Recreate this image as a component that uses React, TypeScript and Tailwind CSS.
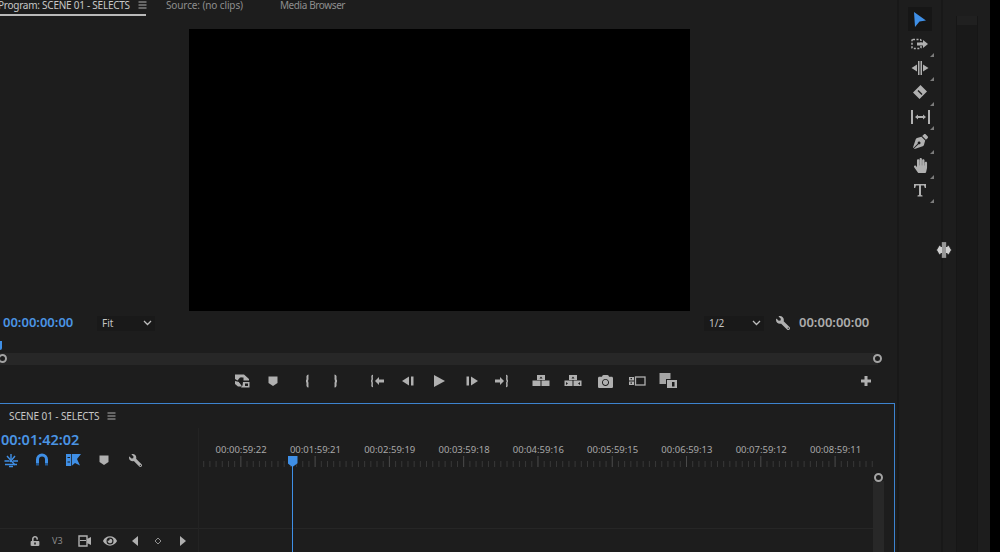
import React from "react";
import { FaWrench, FaHandPaper, FaCamera, FaPenNib, FaEye, FaUnlockAlt } from "react-icons/fa";

const G = "#b0b0b0";
const B = "#3f8fe6";

function S({ w = 20, h = 20, c = G, children }: { w?: number; h?: number; c?: string; children: React.ReactNode }) {
  return (
    <svg width={w} height={h} viewBox={`0 0 ${w} ${h}`} fill={c} className="shrink-0">
      {children}
    </svg>
  );
}

const Menu = () => (
  <S w={9} h={8}>
    <rect x="0.5" y="0.5" width="8" height="1" />
    <rect x="0.5" y="3.5" width="8" height="1" />
    <rect x="0.5" y="6.5" width="8" height="1" />
  </S>
);

const Chevron = () => (
  <svg width="9" height="6" viewBox="0 0 9 6" fill="none" stroke="#bdbdbd" strokeWidth="1.3">
    <path d="M1 1l3.5 3.5L8 1" />
  </svg>
);

const Marker = ({ c = G }: { c?: string }) => (
  <S c={c}>
    <path d="M5.500 5.500h9v6.500l-4.500 3-4.500-3z" />
  </S>
);

const InsertIcon = () => (
  <S>
    <path d="M3 3.500h9l5 4.500v1.500h-5.500V6.500H8L5.500 9.500 3 8z" />
    <path d="M3 10l4 1 3 4.500H6L3 13z" />
    <path d="M11 11h6.500v5.500H9l1.500-2z" />
    <path d="M13 12.500h3v2.500h-3z" fill="#1d1d1d" />
    <path d="M7 11.500l2-5 1 .5-2 5z" fill="#1d1d1d" />
  </S>
);

const Brace = ({ flip }: { flip?: boolean }) => (
  <svg width="20" height="20" viewBox="0 0 20 20" fill="none" stroke={G} strokeWidth="2" className={flip ? "-scale-x-100" : ""}>
    <path d="M11.500 4.500c-1.500 0-1 2-1 3s-.3 2.500-1.500 2.500c1.200 0 1.500 1.500 1.500 2.500s-.5 3 1 3" />
  </svg>
);

const GoIn = () => (
  <S>
    <path fill="none" stroke={G} strokeWidth="1.500" d="M6 4.500c-1.500 0-.8 2-.8 3S5 10 4 10c1 0 1.200 1.500 1.200 2.500S4.500 15.500 6 15.500" />
    <path d="M8 10l4-4v2.500h5v3h-5V14z" />
  </S>
);
const GoOut = () => (
  <S>
    <path fill="none" stroke={G} strokeWidth="1.500" d="M14 4.500c1.500 0 .8 2 .8 3S15 10 16 10c-1 0-1.200 1.500-1.200 2.500s.7 3-.8 3" />
    <path d="M12 10L8 6v2.500H3v3h5V14z" />
  </S>
);
const StepBack = () => (
  <S>
    <path d="M4 10l7-4.500v9z" />
    <rect x="13" y="5.500" width="2.500" height="9" />
  </S>
);
const Play = () => (
  <S>
    <path d="M5 4l11 6-11 6z" />
  </S>
);
const StepFwd = () => (
  <S>
    <rect x="4.500" y="5.500" width="2.500" height="9" />
    <path d="M16 10L9 5.500v9z" />
  </S>
);
const Lift = ({ dots }: { dots?: boolean }) => (
  <S>
    <path d="M6 4h8v5H6z" />
    <path d="M1.500 9.500h8V15h-8z" />
    <path d="M10.500 9.500h8V15h-8z" />
    <path d="M8.500 7.500L10 5.500l1.500 2z" fill="#1d1d1d" />
    {dots && <path d="M3 11l2 1.500L3 14zM17 11l-2 1.500L17 14z" fill="#1d1d1d" />}
  </S>
);
const Camera = () => <FaCamera size={15} color={G} />;
const Compare = () => (
  <S>
    <path d="M2 6h5v3.500H2zM2 10.500h5V14H2z" />
    <path d="M3.500 7h1.500v1.200H3.500zM3.500 11.500h1.500v1.200H3.500z" fill="#1d1d1d" />
    <rect x="8.500" y="6" width="9.500" height="8" fill="none" stroke={G} strokeWidth="1.300" />
  </S>
);
const Overlap = () => (
  <S>
    <rect x="0.500" y="2" width="11" height="11" fill="#a4a4a4" />
    <rect x="7.500" y="8.500" width="11" height="9" stroke="#1d1d1d" strokeWidth="1" />
    <rect x="13" y="11" width="2.500" height="4.500" fill="#1d1d1d" />
  </S>
);
const Plus = () => (
  <S>
    <path d="M8.500 5h3v3.500H15v3h-3.500V15h-3v-3.500H5v-3h3.500z" />
  </S>
);

const Wrench = ({ size = 14 }: { size?: number }) => (
  <span className="-scale-x-100 inline-block">
    <FaWrench size={size} color={G} />
  </span>
);

const Nest = () => (
  <S c={B}>
    <g stroke={B} strokeWidth="1.400" fill="none">
      <path d="M3.500 11h5M12 11h5M4 14.500h12" />
      <path d="M6 6l8 9M14 6L9 12" />
      <path d="M10 4v5M8 16.500h4" />
    </g>
  </S>
);
const Magnet = () => (
  <svg width="20" height="20" viewBox="0 0 20 20" fill="none">
    <path d="M5.500 15V9.500a4.500 4.500 0 0 1 9 0V15" stroke={B} strokeWidth="3" />
    <path d="M4 13h3v2.500H4zM13 13h3v2.500h-3z" fill="#235a96" />
  </svg>
);
const Linked = () => (
  <S c={B}>
    <path d="M3 4h5.500v12H3z" />
    <path d="M8.500 4H18l-4 5 3 6.500-5-2.500-3.500 3z" />
    <path d="M4.500 7h2.500v1H4.500zM4.500 11.500h2.500v1H4.500z" fill="#1d1d1d" />
    <path d="M8.500 3.500v13" stroke="#1d1d1d" strokeWidth="0.700" />
  </S>
);

const Corner = () => (
  <span className="absolute right-[-2px] bottom-[-1px] w-0 h-0 border-l-[4px] border-l-transparent border-b-[4px] border-b-[#7c7c7c]" />
);

function Tool({ children, active, corner = true }: { children: React.ReactNode; active?: boolean; corner?: boolean }) {
  return (
    <div className={`relative w-6 h-[24.4px] flex items-center justify-center ${active ? "bg-[#161616]" : ""}`}>
      {children}
      {corner && <Corner />}
    </div>
  );
}

const Ring = () => <span className="block w-[9px] h-[9px] rounded-full border-2 border-[#a3a3a3] bg-[#1d1d1d]" />;

const labels = [
  "00:00:59:22",
  "00:01:59:21",
  "00:02:59:19",
  "00:03:59:18",
  "00:04:59:16",
  "00:05:59:15",
  "00:06:59:13",
  "00:07:59:12",
  "00:08:59:11",
];

function Ticks() {
  const t: React.ReactNode[] = [];
  for (let i = 0; i < 109; i++) {
    const x = 4.2 + i * 6.19;
    const major = i % 12 === 6;
    t.push(<rect key={i} x={x} y={major ? 0 : 5} width="1" height={major ? 11 : 6} fill={major ? "#4c4c4c" : "#383838"} />);
  }
  return (
    <svg width="674" height="11" className="block">
      {t}
    </svg>
  );
}

export default function App() {
  return (
    <div className="w-[1000px] h-[552px] overflow-hidden flex bg-black text-[#b4b4b4] font-['Noto_Sans',sans-serif] text-[10px]">
      {/* Main column */}
      <div className="w-[897px] flex flex-col bg-[#1d1d1d]">
        {/* Program monitor */}
        <div className="h-[403px] shrink-0 flex flex-col">
          <div className="h-[16px] flex items-start text-[10px] leading-[10px] shrink-0">
            <div className="ml-[-2px] w-[148px] h-[16px] border-b-2 border-[#b9b9b9] flex gap-[8px] items-start whitespace-nowrap text-[#c8c8c8]">
              <span className="tracking-[-0.25px]">Program: SCENE 01 - SELECTS</span>
              <span className="mt-[1px]"><Menu /></span>
            </div>
            <span className="ml-[20px] text-[#8e8e8e] tracking-[-0.12px]">Source: (no clips)</span>
            <span className="ml-[37px] text-[#8e8e8e] tracking-[-0.4px]">Media Browser</span>
          </div>
          <div className="mt-[13px] ml-[189px] w-[501px] h-[282px] bg-black shrink-0" />
          <div className="mt-[3px] h-[18px] flex items-center shrink-0">
            <span className="ml-[3px] w-[88px] text-[13px] font-semibold text-[#4a94e4] whitespace-nowrap">00:00:00:00</span>
            <div className="ml-[6px] w-[58px] h-[15px] bg-[#191919] flex items-center justify-between pl-[5px] pr-[3px] text-[#c4c4c4]">
              Fit
              <Chevron />
            </div>
            <div className="ml-[549px] w-[60px] h-[15px] bg-[#191919] flex items-center justify-between pl-[5px] pr-[3px] text-[#c4c4c4]">
              1/2
              <Chevron />
            </div>
            <span className="ml-[12px] w-[14px] flex"><Wrench /></span>
            <span className="ml-[9px] text-[13px] font-semibold text-[#ababab] whitespace-nowrap">00:00:00:00</span>
          </div>
          {/* scrubber */}
          <div className="relative mt-[21px] h-[12px] w-[878px] bg-[#272727] shrink-0">
            <span className="absolute left-[-3px] top-[-12px] w-[5px] h-[9px] rounded-b-[2px] bg-[#3f8fe6]" />
            <span className="absolute left-[-2px] top-[1px]"><Ring /></span>
            <span className="absolute right-[-4px] top-[1px]"><Ring /></span>
          </div>
          {/* transport */}
          <div className="mt-[6px] h-[20px] flex items-center pl-[232px] shrink-0">
            <InsertIcon />
            <span className="ml-[11px]"><Marker /></span>
            <span className="ml-[14px]"><Brace /></span>
            <span className="ml-[9px]"><Brace flip /></span>
            <span className="ml-[21px]"><GoIn /></span>
            <span className="ml-[11px]"><StepBack /></span>
            <span className="ml-[11px]"><Play /></span>
            <span className="ml-[13px]"><StepFwd /></span>
            <span className="ml-[10px]"><GoOut /></span>
            <span className="ml-[19px]"><Lift /></span>
            <span className="ml-[12px]"><Lift dots /></span>
            <span className="ml-[12px] w-5 flex justify-center"><Camera /></span>
            <span className="ml-[12px]"><Compare /></span>
            <span className="ml-[12px]"><Overlap /></span>
            <span className="ml-[177px]"><Plus /></span>
          </div>
        </div>

        {/* Timeline */}
        <div className="w-[895px] flex-1 min-h-0 flex flex-col border-t border-r border-[#3d83cf]">
          <div className="h-[24px] flex items-center gap-[8px] pl-[9px] shrink-0 text-[#c8c8c8]">
            <span className="tracking-[-0.1px]">SCENE 01 - SELECTS</span>
            <Menu />
          </div>
          <div className="flex-1 flex min-h-0">
            <div className="w-[199px] shrink-0 flex flex-col border-r border-[#232323]">
              <div className="h-[24px] pl-[1px] flex items-center text-[14.500px] font-semibold text-[#4a94e4] shrink-0">00:01:42:02</div>
              <div className="h-[16px] flex items-center shrink-0">
                <span className="ml-[1px]"><Nest /></span>
                <span className="ml-[11px]"><Magnet /></span>
                <span className="ml-[11px]"><Linked /></span>
                <span className="ml-[11px]"><Marker /></span>
                <span className="ml-[13px] w-[16px] flex justify-center"><Wrench size={13} /></span>
              </div>
              <div className="flex-1" />
              <div className="h-[24px] border-t border-[#262626] flex items-center shrink-0">
                <span className="ml-[29px] w-[12px] flex justify-center"><FaUnlockAlt size={10} color={G} /></span>
                <span className="ml-[11px] w-[12px] text-[9px] text-[#8a8a8a]">V3</span>
                <span className="ml-[14px] w-[14px] flex">
                  <S w={14} h={12}>
                    <path d="M1 1h8v10H1z" fill="none" stroke={G} strokeWidth="1.400" />
                    <path d="M2 5h6v1H2z" />
                    <path d="M9 4l4-2v8l-4-2z" />
                  </S>
                </span>
                <span className="ml-[11px] w-[14px] flex"><FaEye size={14} color={G} /></span>
                <span className="ml-[14px]"><S w={8} h={10}><path d="M7 0v10L1 5z" /></S></span>
                <span className="ml-[15px]"><S w={8} h={8}><path d="M4 1l3 3-3 3-3-3z" fill="none" stroke="#8f8f8f" /></S></span>
                <span className="ml-[17px]"><S w={8} h={10}><path d="M1 0v10l6-5z" /></S></span>
              </div>
            </div>
            <div className="relative flex-1 flex flex-col min-w-0">
              <div className="mt-[16px] flex h-[12px] items-center pl-[5px] text-[#a8a8a8] shrink-0 leading-none">
                {labels.map((l) => (
                  <span key={l} className="w-[74.3px] text-center shrink-0 text-[9.500px] whitespace-nowrap">{l}</span>
                ))}
              </div>
              <div className="shrink-0"><Ticks /></div>
              <div className="flex-1 flex min-h-0">
                <div className="flex-1 flex flex-col">
                  <div className="flex-1" />
                  <div className="h-[24px] border-t border-[#262626]" />
                </div>
                <div className="w-[11px] mt-[14px] bg-[#282828] mr-[10px] relative">
                  <span className="absolute left-[1px] top-[-8px]"><Ring /></span>
                </div>
              </div>
              {/* playhead */}
              <span className="absolute left-[93px] top-[31px] bottom-0 w-px bg-[#3f8fe6]" />
              <span className="absolute left-[88.500px] top-[28px] w-[10px] h-[11px] bg-[#3f8fe6] [clip-path:polygon(0_0,100%_0,100%_65%,50%_100%,0_65%)]" />
            </div>
          </div>
        </div>
      </div>

      {/* Tools column */}
      <div className="relative w-[46px] shrink-0 bg-[#1d1d1d] border-l-2 border-l-[#181818] border-r-2 border-r-[#181818] flex flex-col items-center pt-[7px]">
        <Tool active corner={false}>
          <svg width="14" height="17" viewBox="0 0 14 17" fill={B}><path d="M1 1l12 8.500-6.500 1L2 16z" /></svg>
        </Tool>
        <Tool>
          <svg width="18" height="12" viewBox="0 0 18 12" fill="none">
            <rect x="1" y="1.500" width="9" height="9" rx="1" stroke={G} strokeWidth="1.500" strokeDasharray="2 1.500" />
            <path d="M6 4.500h6V2l5 4-5 4V7.500H6z" fill={G} />
          </svg>
        </Tool>
        <Tool>
          <svg width="18" height="14" viewBox="0 0 18 14" fill={G}>
            <rect x="7" y="0" width="1.500" height="14" />
            <rect x="9.500" y="0" width="1.500" height="14" />
            <path d="M0.500 7L6 3.500v7zM17.500 7L12 3.500v7z" />
          </svg>
        </Tool>
        <Tool>
          <svg width="14" height="14" viewBox="0 0 14 14" fill={G}>
            <path fillRule="evenodd" d="M7.500 0L14 6.500 6.500 14 0 7.500zM5.500 5l-1 1 4 4 1-1z" />
          </svg>
        </Tool>
        <Tool>
          <svg width="19" height="14" viewBox="0 0 19 14" fill={G}>
            <rect x="0" y="0" width="2" height="14" />
            <rect x="17" y="0" width="2" height="14" />
            <path d="M4 7l3-2.500V6h5V4.500L15 7l-3 2.500V8H7v1.500z" />
          </svg>
        </Tool>
        <Tool><FaPenNib size={15} color={G} /></Tool>
        <Tool><FaHandPaper size={15} color={G} /></Tool>
        <Tool>
          <svg width="14" height="14" viewBox="0 0 14 14" fill={G}>
            <path d="M1 1h12v4h-1.200L11 2.500H8V12l1.500.6V13.500h-5v-.9L6 12V2.500H3L2.200 5H1z" />
          </svg>
        </Tool>
        {/* resize cursor */}
        <div className="absolute left-[37px] top-[241px]">
          <svg width="16" height="18" viewBox="0 0 16 18">
            <path d="M5.500 1h5v5l2-2 3 5-3 5-2-2v5h-5v-5l-2 2-3-5 3-5 2 2z" fill="#d0d0d0" stroke="#222" strokeWidth="0.800" />
            <path d="M7 2v14M9 2v14" stroke="#444" strokeWidth="0.800" />
          </svg>
        </div>
      </div>

      {/* Audio meter column */}
      <div className="w-[47px] shrink-0 bg-[#1d1d1d] flex pl-[13px] pr-[12px]">
        <div className="w-[22px] h-full pt-[16px]">
          <div className="h-full flex flex-col border-l border-r border-[#161616] bg-[#191919]">
            <div className="h-[9px] bg-[#202020]" />
            <div className="flex-1" />
          </div>
        </div>
      </div>
      <div className="flex-1 bg-black" />
    </div>
  );
}
